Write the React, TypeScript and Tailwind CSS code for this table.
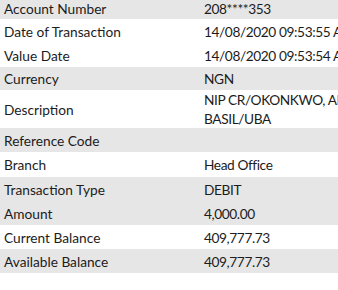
const rows = [
  { label: "Account Number", value: "208****353", gray: true, h: "h-[19px]", top: true },
  { label: "Date of Transaction", value: "14/08/2020 09:53:55 AM", gray: false },
  { label: "Value Date", value: "14/08/2020 09:53:54 AM", gray: false },
  { label: "Currency", value: "NGN", gray: true, h: "h-[23px]" },
  { label: "Description", value: "NIP CR/OKONKWO, AMAKA BASIL/UBA", gray: false, h: "h-[38px]" },
  { label: "Reference Code", value: "", gray: true },
  { label: "Branch", value: "Head Office", gray: false, h: "h-[25px]" },
  { label: "Transaction Type", value: "DEBIT", gray: true },
  { label: "Amount", value: "4,000.00", gray: true },
  { label: "Current Balance", value: "409,777.73", gray: false },
  { label: "Available Balance", value: "409,777.73", gray: true },
];

export default function App() {
  return (
    <div className="w-[338px] h-[290px] overflow-hidden bg-white text-[#1c1c1c] text-[13.7px] leading-[19px] font-['Lato',sans-serif]">
      <div className="w-[440px]">
        {rows.map((r) => (
          <div
            key={r.label}
            className={`flex ${r.h ?? "h-[24px]"} ${r.gray ? "bg-[#e6e6e6]" : "bg-white"}`}
          >
            <div className={`w-[204px] pl-[4px] flex ${r.top ? "items-end pb-[1px]" : "items-center"}`}>
              {r.label}
            </div>
            <div className={`w-[200px] flex tracking-[-0.4px] ${r.top ? "items-end pb-[1px]" : "items-center"}`}>
              {r.value}
            </div>
          </div>
        ))}
      </div>
    </div>
  );
}
